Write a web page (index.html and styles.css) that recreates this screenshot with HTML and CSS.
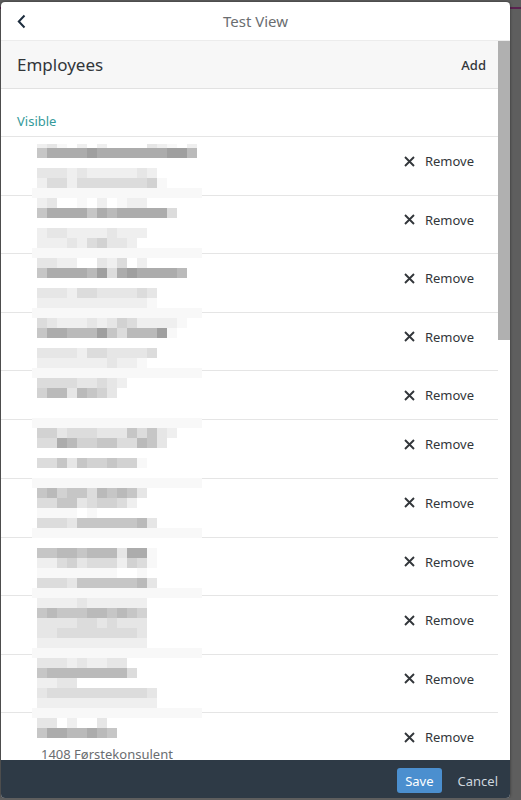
FILE: index.html
```html
<!DOCTYPE html>
<html lang="en">
<head>
    <meta charset="UTF-8">
    <title>Test View</title>
    <link rel="stylesheet" href="styles.css">
</head>
<body>
    <div class="dialog">
        <div class="dlg-head">
            <button class="back"><svg width="9" height="15" viewBox="0 0 9 15"><polyline points="7.5,1.5 1.8,7.5 7.5,13.5" fill="none" stroke="#1d2d3e" stroke-width="2"/></svg></button>
            <h1>Test View</h1>
            <span></span>
        </div>
        <div class="dlg-body">
            <div class="scroll">
                <div class="toolbar">
                    <h2>Employees</h2>
                    <button class="add">Add</button>
                </div>
                <div class="group">Visible</div>
                <ul class="list">
                    <li class="row"><div class="emp"></div><button class="remove"><svg width="11" height="11" viewBox="0 0 11 11"><path d="M1 1L10 10M10 1L1 10"/></svg>Remove</button></li>
                    <li class="row"><div class="emp"></div><button class="remove"><svg width="11" height="11" viewBox="0 0 11 11"><path d="M1 1L10 10M10 1L1 10"/></svg>Remove</button></li>
                    <li class="row"><div class="emp"></div><button class="remove"><svg width="11" height="11" viewBox="0 0 11 11"><path d="M1 1L10 10M10 1L1 10"/></svg>Remove</button></li>
                    <li class="row"><div class="emp"></div><button class="remove"><svg width="11" height="11" viewBox="0 0 11 11"><path d="M1 1L10 10M10 1L1 10"/></svg>Remove</button></li>
                    <li class="row single"><div class="emp"></div><button class="remove"><svg width="11" height="11" viewBox="0 0 11 11"><path d="M1 1L10 10M10 1L1 10"/></svg>Remove</button></li>
                    <li class="row"><div class="emp"></div><button class="remove"><svg width="11" height="11" viewBox="0 0 11 11"><path d="M1 1L10 10M10 1L1 10"/></svg>Remove</button></li>
                    <li class="row"><div class="emp"></div><button class="remove"><svg width="11" height="11" viewBox="0 0 11 11"><path d="M1 1L10 10M10 1L1 10"/></svg>Remove</button></li>
                    <li class="row"><div class="emp"></div><button class="remove"><svg width="11" height="11" viewBox="0 0 11 11"><path d="M1 1L10 10M10 1L1 10"/></svg>Remove</button></li>
                    <li class="row"><div class="emp"></div><button class="remove"><svg width="11" height="11" viewBox="0 0 11 11"><path d="M1 1L10 10M10 1L1 10"/></svg>Remove</button></li>
                    <li class="row"><div class="emp"></div><button class="remove"><svg width="11" height="11" viewBox="0 0 11 11"><path d="M1 1L10 10M10 1L1 10"/></svg>Remove</button></li>
                    <li class="row"><div class="emp"><span class="emp-name"></span><span class="emp-title">1408 Førstekonsulent</span></div><button class="remove"><svg width="11" height="11" viewBox="0 0 11 11"><path d="M1 1L10 10M10 1L1 10"/></svg>Remove</button></li>
                    <li class="row"><div class="emp"></div><button class="remove">Remove</button></li>
                    <div class="blur" id="blur"></div>
                </ul>
            </div>
            <div class="scrollbar"><div class="thumb"></div></div>
        </div>
        <div class="dlg-foot">
            <button class="save">Save</button>
            <button class="cancel">Cancel</button>
        </div>
    </div>

<script type="text/javascript">
// pixelated names (anonymised), one string per 10px band
var shades = {'0':'#ffffff','1':'#f8f8f8','2':'#efefef','3':'#e6e6e6','4':'#dcdcdc',
              '5':'#d2d2d2','6':'#c6c6c6','7':'#bababa','8':'#acacac','9':'#9f9f9f'};
var bands = [
    "2310202000032102","6888898888888997","0000000000000000","3332322222320000","2442444444451000","1111111111111111",
    "2300102012200000","6888868788888400","0000000000000000","2332222322200000","2223245332000000","1111111111111111",
    "3322003240200000","6888879489888870","0000000000000000","3332443333430000","2222222222210000","1111111111111111",
    "4322232354222210","6887779647779100","0000000000000000","3333244333340000","2222222322100000","1111111111111111",
    "4444334320000000","5773765300000000","0000000000000000","0000000000000000","1111111111111111",
    "5534443336463200","4487556644763000","0000000000000000","4463655655100000","0000000000000000","1111111111111111",
    "6756647676300000","4466345542000000","1111010000000000","4443666666730000","1111111111111111",
    "0000000000000000","6677677738810000","2245344425410000","1111111100100000","4443666666730000","1111111111111111",
    "2222322222200000","6766677676500000","3333443433300000","3344444444300000","2222222222200000","1111111111111111",
    "3332322330000000","6777777774000000","2233000000000000","3444444444430000","2222222222220000","1111111111111111",
    "3302003000000000","6887787600000000"
];
var blur = document.getElementById('blur');
for (var i = 0; i < bands.length; i++) {
    var line = document.createElement('div');
    line.className = 'blur-line';
    if (bands[i] == "1111111111111111") line.style.backgroundColor = shades['1'];
    for (var j = 0; j < bands[i].length; j++) {
        var cell = document.createElement('span');
        cell.style.backgroundColor = shades[bands[i].charAt(j)];
        line.appendChild(cell);
    }
    blur.appendChild(line);
}
</script>
</body>
</html>
```

FILE: styles.css
```css
*{
    margin: 0;
    padding: 0;
    box-sizing: border-box;
}
body {
    background: linear-gradient(to bottom, transparent 7px, #5a2250 7px, #5a2250 9px, transparent 9px) #5e5e5e;
    font-family: "Noto Sans", "Liberation Sans", sans-serif;
    color: #32363a;
    overflow: hidden;
}
button {
    font-family: "Noto Sans", "Liberation Sans", sans-serif;
    background: none;
    border: 0;
    cursor: pointer;
}
.dialog {
    width: 509px;
    height: 796px;
    margin: 2px 0 0 1px;
    background: #fff;
    border-radius: 4px;
    display: flex;
    flex-direction: column;
    overflow: hidden;
    box-shadow: 0 0 3px rgba(0,0,0,.5);
}
.dlg-head {
    height: 39px;
    display: grid;
    grid-template-columns: 40px 1fr 40px;
    align-items: center;
    border-bottom: 1px solid #ececec;
}
.back {
    display: flex;
    padding-left: 16px;
}
.dlg-head h1 {
    font-size: 15px;
    font-weight: normal;
    color: #6a6d70;
    text-align: center;
}
.dlg-body {
    flex: 1;
    display: flex;
    min-height: 0;
}
.scroll {
    flex: 1;
    overflow: hidden;
}
.toolbar {
    height: 48px;
    background: #f7f7f7;
    border-bottom: 1px solid #e2e2e2;
    display: flex;
    align-items: center;
    justify-content: space-between;
    padding: 0 12px 0 16px;
}
.toolbar h2 {
    font-size: 17px;
    font-weight: normal;
}
.add {
    font-size: 13px;
    font-weight: 500;
    color: #32363a;
}
.group {
    height: 48px;
    display: flex;
    align-items: flex-end;
    padding: 0 0 7px 16px;
    font-size: 13px;
    line-height: 16px;
    color: #349a9a;
    border-bottom: 1px solid #e5e5e5;
}
.list {
    list-style: none;
    position: relative;
}
.row {
    height: 58.6px;
    display: flex;
    justify-content: space-between;
    align-items: flex-start;
    padding: 0 24px 0 40px;
    border-bottom: 1px solid #e5e5e5;
}
.row.single {
    height: 49px;
}
.emp {
    display: flex;
    flex-direction: column;
    padding-top: 13px;
}
.emp-name {
    height: 20px;
}
.emp-title {
    font-size: 13px;
    line-height: 16px;
    color: #6a6d70;
}
.remove {
    margin-top: 6px;
    height: 36px;
    display: flex;
    align-items: center;
    gap: 10px;
    font-size: 13px;
    color: #32363a;
}
.remove svg path {
    stroke: #32363a;
    stroke-width: 1.9;
    fill: none;
}
.blur {
    position: absolute;
    top: 7px;
    left: 31px;
    width: 170px;
    background: #fff;
}
.blur-line {
    display: flex;
    height: 10px;
    padding: 0 5px;
}
.blur-line:first-child {
    height: 4px;
}
.blur-line span {
    width: 10px;
}
.scrollbar {
    width: 12px;
    background: #fff;
}
.thumb {
    height: 299px;
    background: #b0b0b0;
}
.dlg-foot {
    height: 38px;
    background: #2e3a46;
    display: flex;
    justify-content: flex-end;
    align-items: flex-start;
    gap: 8px;
    padding: 8px 4px 0 0;
}
.save {
    height: 25px;
    padding: 0 8px;
    background: #4b8fcf;
    color: #fff;
    border-radius: 3px;
    font-size: 13px;
}
.cancel {
    height: 25px;
    padding: 0 8px;
    color: #cfd7df;
    font-size: 13px;
}
```
